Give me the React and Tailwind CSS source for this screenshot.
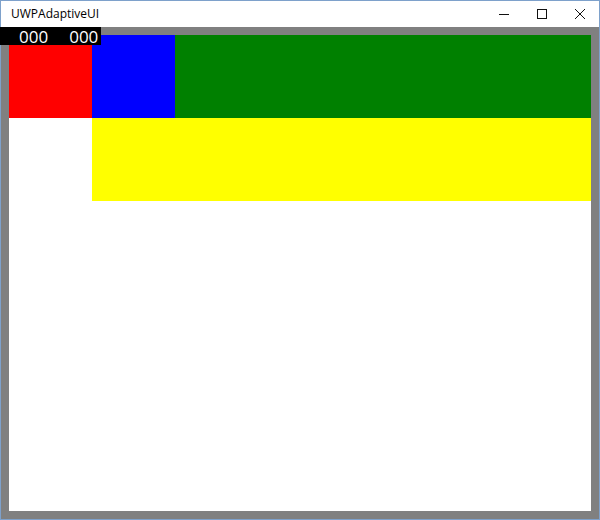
export default function App() {
  return (
    <div className="relative w-[600px] h-[520px] flex flex-col bg-[#808080] border border-[#7ea1cb] font-['Open_Sans','Noto_Sans',sans-serif]">
      {/* title bar */}
      <div className="h-[26px] bg-white flex items-center shrink-0">
        <span className="pl-[10px] text-[12px] text-black leading-none">UWPAdaptiveUI</span>
        <div className="ml-auto flex h-full">
          <div className="w-[38px] h-full flex items-center justify-center">
            <svg width="10" height="10" viewBox="0 0 10 10">
              <line x1="0" y1="5.5" x2="10" y2="5.5" stroke="#111" strokeWidth="1" />
            </svg>
          </div>
          <div className="w-[38px] h-full flex items-center justify-center">
            <svg width="10" height="10" viewBox="0 0 10 10">
              <rect x="0.5" y="0.5" width="9" height="9" fill="none" stroke="#111" strokeWidth="1" />
            </svg>
          </div>
          <div className="w-[38px] h-full flex items-center justify-center">
            <svg width="10" height="10" viewBox="0 0 10 10">
              <path d="M0 0 L10 10 M10 0 L0 10" stroke="#111" strokeWidth="1" />
            </svg>
          </div>
        </div>
      </div>

      {/* client area */}
      <div className="flex-1 pt-[8px] pl-[8px] pr-[8px] pb-[8px] flex">
        <div className="flex-1 bg-white flex flex-col">
          <div className="flex h-[83px]">
            <div className="w-[83px] bg-[#ff0000]" />
            <div className="w-[83px] bg-[#0000ff]" />
            <div className="flex-1 bg-[#008000]" />
          </div>
          <div className="flex h-[83px]">
            <div className="w-[83px]" />
            <div className="flex-1 bg-[#ffff00]" />
          </div>
        </div>
      </div>

      {/* frame rate counter overlay */}
      <div className="absolute left-[-1px] top-[26px] w-[101px] h-[18px] bg-black flex items-center text-white text-[17px] leading-none">
        <span className="ml-[19px]">000</span>
        <span className="ml-[21px]">000</span>
      </div>
    </div>
  );
}
